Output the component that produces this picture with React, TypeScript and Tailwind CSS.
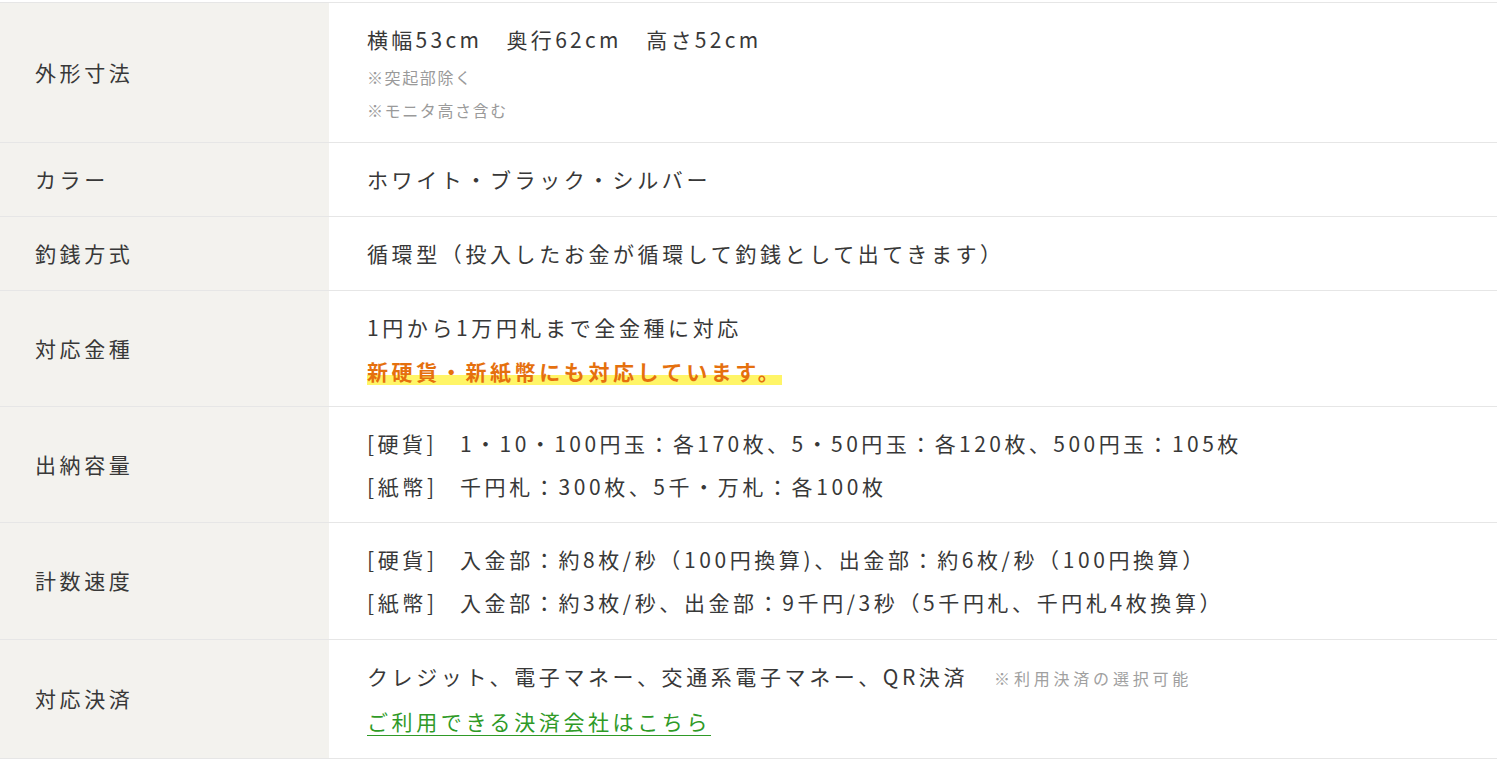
import React from "react";

const font = { fontFamily: '"Noto Sans CJK JP", "Noto Sans", sans-serif' };

function Row({ label, children }: { label: string; children: React.ReactNode }) {
  return (
    <div className="flex border-b border-[#e6e6e6]">
      <div className="w-[329px] shrink-0 bg-[#f3f2ee] pl-[35px] flex items-center text-[21px] tracking-[3.6px] text-[#383838]">
        {label}
      </div>
      <div className="flex-1 pl-[38px] py-[15px] text-[21px] leading-[43px] tracking-[3.6px] text-[#383838]">
        {children}
      </div>
    </div>
  );
}

function Tag({ children }: { children: React.ReactNode }) {
  return <span className="inline-block w-[93px]">{children}</span>;
}

export default function App() {
  return (
    <div className="w-[1500px] h-[765px] bg-white" style={font}>
      <div className="pt-[2px] w-[1497px]">
        <div className="border-t border-[#e6e6e6]">
          <Row label="外形寸法">
            <div className="tracking-[3.3px]">横幅53cm　奥行62cm　高さ52cm</div>
            <div className="text-[16px] leading-[33px] tracking-[0.1em] text-[#9a9a9a]">※突起部除く</div>
            <div className="text-[16px] leading-[33px] tracking-[0.1em] text-[#9a9a9a]">※モニタ高さ含む</div>
          </Row>
          <Row label="カラー">
            <div>ホワイト・ブラック・シルバー</div>
          </Row>
          <Row label="釣銭方式">
            <div>循環型（投入したお金が循環して釣銭として出てきます）</div>
          </Row>
          <Row label="対応金種">
            <div>1円から1万円札まで全金種に対応</div>
            <div className="h-[42px] pt-[2px] leading-[40px]">
              <span className="font-bold text-[#e5700e] pb-[1px] bg-[linear-gradient(transparent_62%,#fff567_62%,#fff567_94%,transparent_94%)]">
                新硬貨・新紙幣にも対応しています。
              </span>
            </div>
          </Row>
          <Row label="出納容量">
            <div className="tracking-[3.45px]"><Tag>[硬貨]</Tag>1・10・100円玉：各170枚、5・50円玉：各120枚、500円玉：105枚</div>
            <div className="h-[42px] leading-[42px]"><Tag>[紙幣]</Tag>千円札：300枚、5千・万札：各100枚</div>
          </Row>
          <Row label="計数速度">
            <div><Tag>[硬貨]</Tag>入金部：約8枚/秒（100円換算)、出金部：約6枚/秒（100円換算）</div>
            <div><Tag>[紙幣]</Tag>入金部：約3枚/秒、出金部：9千円/3秒（5千円札、千円札4枚換算）</div>
          </Row>
          <Row label="対応決済">
            <div>
              クレジット、電子マネー、交通系電子マネー、QR決済
              <span className="ml-[26px] text-[16px] tracking-[3.8px] text-[#a0a0a0]">※利用決済の選択可能</span>
            </div>
            <div>
              <a className="inline-block leading-[28px] text-[#2f9a27] border-b border-[#2f9a27]" href="#">
                ご利用できる決済会社はこちら
              </a>
            </div>
          </Row>
        </div>
      </div>
    </div>
  );
}
